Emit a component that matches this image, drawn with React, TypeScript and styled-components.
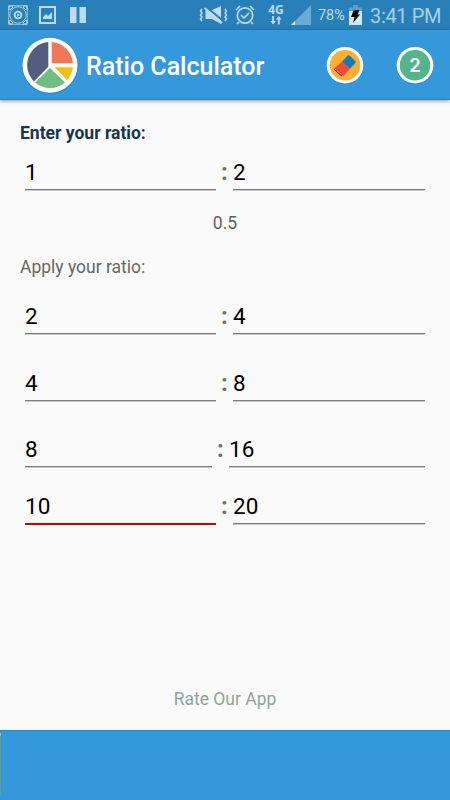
import React from "react";
import styled, { createGlobalStyle } from "styled-components";

const GlobalStyle = createGlobalStyle`
  * { box-sizing: border-box; }
  body { margin: 0; background: #fafafa; font-family: Roboto, sans-serif; }
`;

const Screen = styled.div`
  width: 450px;
  height: 800px;
  display: flex;
  flex-direction: column;
  background: #fafafa;
  overflow: hidden;
`;

const StatusBar = styled.header`
  height: 30px;
  flex: none;
  display: flex;
  align-items: center;
  background: #2980b9;
  color: #bddaee;
  padding: 0 8px;
`;

const StatusIcon = styled.svg<{ $gap?: number }>`
  display: block;
  flex: none;
  margin-left: ${(p) => p.$gap ?? 0}px;
`;

const Network = styled.div`
  width: 20px;
  margin-left: 11px;
  display: flex;
  flex-direction: column;
  align-items: center;
  font-size: 12px;
  line-height: 12px;
  font-weight: 700;
  font-family: "Open Sans", sans-serif;
  padding-bottom: 2px;
`;

const Percent = styled.span`
  width: 28px;
  margin-left: 7px;
  font-size: 14.4px;
  line-height: 18px;
  padding-top: 2px;
  white-space: nowrap;
`;

const Clock = styled.span`
  margin-left: 8px;
  font-size: 20px;
  line-height: 24px;
  letter-spacing: -0.35px;
  padding-top: 2px;
  font-weight: 400;
  color: #a9cee7;
  white-space: nowrap;
`;

const Toolbar = styled.div`
  height: 70px;
  flex: none;
  display: flex;
  align-items: center;
  padding: 0 15px 0 20px;
  background: #3498db;
  border-bottom: 1px solid #188bd0;
  box-shadow: 0 1px 4px rgba(0, 0, 0, 0.4);
  z-index: 1;
`;

const Title = styled.h1`
  flex: 1;
  margin: 0 0 0 6px;
  padding-top: 5px;
  font-size: 25px;
  line-height: 30px;
  font-weight: 500;
  color: #fff;
  white-space: nowrap;
`;

const ToolIcon = styled.svg`
  display: block;
  margin-left: 30px;
`;

const Content = styled.main`
  flex: 1;
  display: flex;
  flex-direction: column;
  padding: 22px 25px 0;
`;

const Label = styled.div<{ $strong?: boolean; $top: number }>`
  margin: ${(p) => p.$top}px 0 0 -5px;
  height: 22px;
  font-size: 17.5px;
  line-height: 22px;
  font-weight: ${(p) => (p.$strong ? 700 : 400)};
  color: ${(p) => (p.$strong ? "#17344f" : "#666")};
`;

const Result = styled.div`
  margin-top: 21px;
  height: 22px;
  text-align: center;
  font-size: 17.5px;
  line-height: 22px;
  color: #5e5e5e;
`;

const RatioRow = styled.div<{ $top: number; $left: number }>`
  display: grid;
  grid-template-columns: ${(p) => p.$left}px 17px 1fr;
  height: 35px;
  margin-top: ${(p) => p.$top}px;
`;

const Field = styled.div<{ $active?: boolean }>`
  height: ${(p) => (p.$active ? 35 : 34)}px;
  border-bottom: ${(p) => (p.$active ? "2px solid #c30500" : "1px solid #7d7d7d")};
  box-shadow: ${(p) => (p.$active ? "none" : "0 1px 0 #c9c9c9")};
  font-size: 22.5px;
  line-height: 32px;
  color: #000;
`;

const Colon = styled.span`
  text-align: center;
  font-size: 24px;
  line-height: 33px;
  font-weight: 700;
  color: #707070;
`;

const RateLink = styled.div`
  margin-top: auto;
  margin-bottom: 20px;
  height: 22px;
  text-align: center;
  font-size: 17.5px;
  line-height: 22px;
  color: #8fa39e;
`;

const AdBar = styled.footer`
  height: 70px;
  flex: none;
  padding-top: 2px;
  background: #3498db;
  border-top: 1px solid #188bd0;
`;

const AdEdge = styled.div`
  width: 1px;
  height: 62px;
  background: #5b9fae;
  border-top: 3px solid #9fb9d8;
`;

type Ratio = { left: string; right: string; top: number; width?: number; active?: boolean };

const applied: Ratio[] = [
  { left: "2", right: "4", top: 22 },
  { left: "4", right: "8", top: 32 },
  { left: "8", right: "16", top: 31, width: 187 },
  { left: "10", right: "20", top: 22, active: true },
];

function RatioFields({ left, right, top, width = 191, active }: Ratio) {
  return (
    <RatioRow $top={top} $left={width}>
      <Field $active={active}>{left}</Field>
      <Colon>:</Colon>
      <Field>{right}</Field>
    </RatioRow>
  );
}

function StatusIcons() {
  return (
    <StatusBar>
      <StatusIcon width="20" height="20" viewBox="0 0 20 20" fill="none" stroke="currentColor">
        <rect x=".7" y=".7" width="18.6" height="18.6" rx="2" strokeWidth="1.2" strokeOpacity=".6" />
        <path d="M1 5V1h4M15 1h4v4M19 15v4h-4M5 19H1v-4" strokeWidth="1.2" />
        <circle cx="10" cy="10" r="8.2" strokeWidth="1" strokeOpacity=".8" />
        <circle cx="10" cy="10" r="3.4" strokeWidth="1.9" />
        <path d="M9 8.2v3.6l3-1.8z" fill="currentColor" stroke="none" />
        <path d="M2 5 5 2M15 2l3 3M2 15l3 3M15 18l3-3" strokeWidth="1" />
      </StatusIcon>
      <StatusIcon $gap={11} width="17" height="18" viewBox="0 0 17 18">
        <rect x="1" y="1" width="15" height="16" fill="none" stroke="currentColor" strokeWidth="2" />
        <path d="M4 13V11l3-3 2 2 4-4v7z" fill="currentColor" />
      </StatusIcon>
      <StatusIcon $gap={14} width="16" height="16" viewBox="0 0 16 16" fill="currentColor">
        <path d="M0 0h6.5v16H0zM9.5 0H16v16H9.5z" />
      </StatusIcon>
      <StatusIcon $gap={113} width="30" height="20" viewBox="0 0 30 20" fill="none" stroke="currentColor">
        <path d="M6.5 5.5H12L22 1v18l-9-5H6.5z" fill="currentColor" stroke="none" />
        <path d="m6.5 1.3 18 15" stroke="#2980b9" strokeWidth="2" />
        <path d="m5.5 3 17.5 15" strokeWidth="1.8" />
        <path d="M3 4 1.5 6 3 8l-1.5 2L3 12l-1.5 2L3 16M26 4l1.5 2L26 8l1.5 2-1.5 2 1.5 2-1.5 2" strokeWidth="1.5" />
      </StatusIcon>
      <StatusIcon $gap={6} width="20" height="20" viewBox="0 0 20 20" fill="none" stroke="currentColor" strokeWidth="1.7">
        <circle cx="10" cy="10.5" r="7.7" />
        <path d="m6 10 3 3 5-5M1 5l4-4M19 5l-4-4M4 17l-2 2M16 17l2 2" />
      </StatusIcon>
      <Network>
        4G
        <StatusIcon width="12" height="9" viewBox="0 0 12 9" fill="currentColor">
          <path d="M2.2 0H4v5h2L3.1 8.5.2 5h2zM7.9 8.5h1.8v-5h2L8.8 0 5.9 3.5h2z" />
        </StatusIcon>
      </Network>
      <StatusIcon $gap={5} width="20" height="20" viewBox="0 0 20 20">
        <path d="M0 20 20 0v20z" fill="#6baad4" />
        <path d="M0 20l4-4v4z" fill="#d3e8f5" />
      </StatusIcon>
      <Percent>78%</Percent>
      <StatusIcon $gap={3} width="13" height="20" viewBox="0 0 13 20">
        <path d="M4 0h5v2.5h4V6H0V2.5h4z" fill="#5b9fcd" />
        <path d="M0 6h13v14H0z" fill="#d5e7f3" />
        <path d="m4.5 5.5 6-.5-2 4.5H11L4 18l1.5-6H2z" fill="#050505" />
      </StatusIcon>
      <Clock>3:41 PM</Clock>
    </StatusBar>
  );
}

function Logo() {
  return (
    <svg width="60" height="60" viewBox="0 0 60 60">
      <circle cx="30" cy="31" r="27.8" fill="#1876b2" opacity=".65" />
      <circle cx="30" cy="30.3" r="27.5" fill="#fff" />
      <path d="M28.3 7.1A23 23 0 0 0 14 46.4L28.3 31.7z" fill="#535d7e" />
      <path d="M31.7 7.1A23 23 0 0 1 52.9 28.3H31.7z" fill="#f07857" />
      <path d="M34.5 32.2h18.4A23 23 0 0 1 46.8 45z" fill="#edc118" />
      <path d="M30 33 44.9 47.5a23 23 0 0 1-29.8 0z" fill="#6fbd81" />
    </svg>
  );
}

function EraserIcon() {
  return (
    <ToolIcon width="40" height="40" viewBox="0 0 40 40">
      <circle cx="20" cy="21" r="18.3" fill="#1876b2" opacity=".55" />
      <circle cx="20" cy="20.2" r="18.3" fill="#fff" />
      <circle cx="20" cy="20.2" r="15.3" fill="#fbb034" />
      <path d="M22.8 10.6q1-.8 2 .2l5.5 5.2q.8 1 0 1.9l-5.4 6-8-7.2z" fill="#147db8" />
      <path d="m16.9 16.7 8 7.2-6.3 6.8q-.9.8-1.8 0l-6.7-6q-.9-1-.1-1.9z" fill="#ef4941" />
      <path d="m9.5 24 7.6 6.8" fill="none" stroke="#a71e2d" strokeWidth="1.8" />
      <path d="m10 24 7.3 6.4" fill="none" stroke="#fff" strokeWidth=".8" strokeDasharray="1.5 .8" />
    </ToolIcon>
  );
}

function CounterIcon() {
  return (
    <ToolIcon width="40" height="40" viewBox="0 0 40 40">
      <circle cx="20" cy="21" r="18.3" fill="#1876b2" opacity=".55" />
      <circle cx="20" cy="20.2" r="18.3" fill="#fff" />
      <circle cx="20" cy="20.2" r="15.3" fill="#54b48c" />
      <text x="20" y="26.8" textAnchor="middle" fontFamily="Inter, sans-serif" fontWeight="600" fontSize="18.5" fill="#fff">
        2
      </text>
    </ToolIcon>
  );
}

export default function App() {
  return (
    <Screen>
      <GlobalStyle />
      <StatusIcons />
      <Toolbar>
        <Logo />
        <Title>Ratio Calculator</Title>
        <EraserIcon />
        <CounterIcon />
      </Toolbar>
      <Content>
        <Label $strong $top={0}>Enter your ratio:</Label>
        <RatioFields left="1" right="2" top={12} />
        <Result>0.5</Result>
        <Label $top={22}>Apply your ratio:</Label>
        {applied.map((r) => (
          <RatioFields key={r.left} {...r} />
        ))}
        <RateLink>Rate Our App</RateLink>
      </Content>
      <AdBar>
        <AdEdge />
      </AdBar>
    </Screen>
  );
}
